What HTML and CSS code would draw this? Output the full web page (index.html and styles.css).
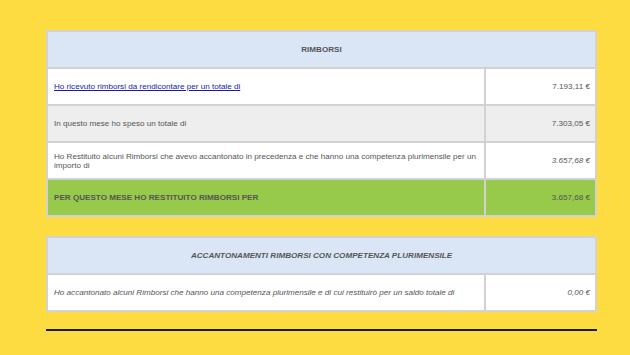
FILE: index.html
```html
<!DOCTYPE html>
<html lang="it">
<head>
<meta charset="utf-8">
<title>Rimborsi</title>
<link rel="stylesheet" href="styles.css">
</head>
<body>
<div class="page">
  <table class="tbl">
    <colgroup><col><col class="vcol"></colgroup>
    <tr class="head"><th colspan="2">RIMBORSI</th></tr>
    <tr class="white"><td class="lbl"><a href="#">Ho ricevuto rimborsi da rendicontare per un totale di</a></td><td class="val">7.193,11 €</td></tr>
    <tr class="gray"><td class="lbl">In questo mese ho speso un totale di</td><td class="val">7.303,05 €</td></tr>
    <tr class="white"><td class="lbl">Ho Restituito alcuni Rimborsi che avevo accantonato in precedenza e che hanno una competenza plurimensile per un importo di</td><td class="val it">3.657,68 €</td></tr>
    <tr class="green"><td class="lbl bold">PER QUESTO MESE HO RESTITUITO RIMBORSI PER</td><td class="val">3.657,68 €</td></tr>
  </table>
  <table class="tbl second">
    <colgroup><col><col class="vcol"></colgroup>
    <tr class="head"><th colspan="2" class="it">ACCANTONAMENTI RIMBORSI CON COMPETENZA PLURIMENSILE</th></tr>
    <tr class="white"><td class="lbl it">Ho accantonato alcuni Rimborsi che hanno una competenza plurimensile e di cui restituirò per un saldo totale di</td><td class="val it">0,00 €</td></tr>
  </table>
  <div class="rule"></div>
</div>
</body>
</html>
```
FILE: styles.css
```css
html, body { margin: 0; padding: 0; }
body {
  background: #fddc42;
  font-family: "Liberation Sans", Arial, sans-serif;
  color: #555;
  font-size: 8.1px;
}
.page {
  width: 551px;
  margin-left: 46px;
  padding-top: 30px;
}
.tbl {
  width: 551px;
  border-collapse: collapse;
  table-layout: fixed;
}
.vcol { width: 111px; }
.tbl td, .tbl th {
  border: 2px solid #d2d2d2;
  height: 35px;
  padding: 0 6px;
  vertical-align: middle;
}
.tbl .val { text-align: right; padding-right: 5px; }
.head th {
  background: #dae6f6;
  font-weight: bold;
  color: #555;
  text-align: center;
}
.white td { background: #fff; }
.gray td { background: #eeeeee; }
.green td { background: #97c94a; }
.bold { font-weight: bold; }
.it { font-style: italic; }
a { color: #1a1aa6; }
.second { margin-top: 19px; }
.rule {
  margin-top: 17px;
  height: 2px;
  background: #1a1a1a;
}
```
